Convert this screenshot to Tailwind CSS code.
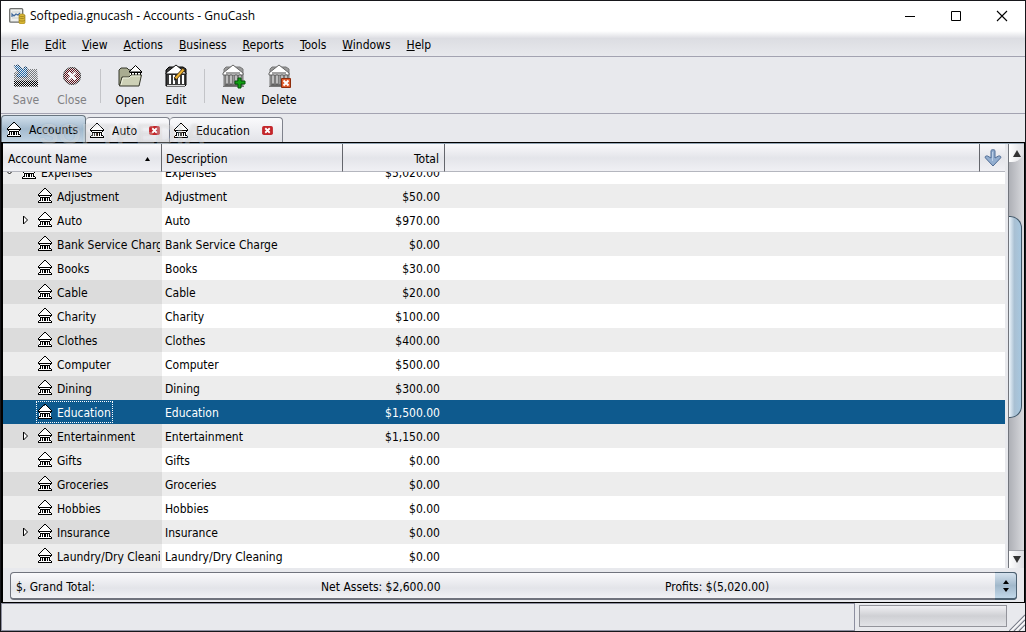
<!DOCTYPE html>
<html lang="en">
<head>
    <meta charset="UTF-8">
    <meta name="viewport" content="width=device-width, initial-scale=1.0">
    <title>Softpedia.gnucash - Accounts - GnuCash</title>
    <script src="https://cdn.jsdelivr.net/npm/@tailwindcss/browser@4"></script>
</head>
<body class="h-screen overflow-hidden bg-[#e8e9ed] font-['DejaVu_Sans_Condensed','Noto_Sans',sans-serif] text-xs text-black">

    <!-- Shared icons -->
    <svg class="absolute h-0 w-0" aria-hidden="true">
        <symbol id="bank" viewBox="0 0 14 16">
            <g shape-rendering="crispEdges">
                <path d="M7 1h1v1h1v1h1v1h1v1h1v1h1v9H1V6h1V5h1V4h1V3h1V2h2z" fill="#fff"/>
                <path d="M6 0h2v1H6zM5 1h1v1H5zM8 1h1v1H8zM4 2h1v1H4zM9 2h1v1H9zM3 3h1v1H3zM10 3h1v1h-1zM2 4h1v1H2zM11 4h1v1h-1zM1 5h1v1H1zM12 5h1v1h-1zM0 6h1v1H0zM13 6h1v1h-1z"/>
                <path d="M0 7h14v1H0zM1 8h1v1H1zM12 8h1v1h-1zM2 9h1v4H2zM4 9h1v4H4zM5 9h1v1H5zM6 9h2v4H6zM9 9h1v4H9zM8 9h1v1H8zM11 9h1v4h-1zM3 9h1v1H3zM10 9h1v1h-1zM1 12h1v1H1zM12 12h1v1h-1zM0 13h1v1H0zM13 13h1v1h-1zM0 14h14v1H0z"/>
            </g>
        </symbol>
        <symbol id="bank-large" viewBox="0 0 24 24">
            <path d="M5 3 3 5v17h19V5l-3-2z" fill="#9a9a9a" stroke="#777"/>
            <path d="M2 9 12 1l10 8v2H2z" fill="#fff" stroke="#666"/>
            <path d="M5 9h14M4 21h17" stroke="#444" stroke-width="1"/>
            <path d="M5 11h2v9H5zM9 11h2v9H9zM14 11h2v9h-2zM18 11h2v9h-2z" fill="#fff" stroke="#444" stroke-width=".7"/>
            <path d="M2 22.500h21" stroke="#777"/>
        </symbol>
        <symbol id="tab-x" viewBox="0 0 12 10">
            <rect width="12" height="10" rx="2" fill="#c4262b"/>
            <path d="m3.500 2.500 5 5m0-5-5 5" stroke="#fff" stroke-width="2"/>
        </symbol>
        <pattern id="stipple" width="2" height="2" patternUnits="userSpaceOnUse">
            <path d="M0 0h1v1H0zM1 1h1v1H1z" fill="#e8e9ed"/>
        </pattern>
    </svg>

    <div class="flex h-full flex-col border border-[#17171b]">

        <!-- Title bar -->
        <header class="flex h-[30px] shrink-0 items-center bg-white pl-2 font-['Open_Sans',sans-serif]">
            <svg class="mr-1 h-4 w-[17px]" viewBox="0 0 17 16" fill="none">
                <rect x=".7" y=".7" width="13" height="13.500" rx="1" fill="#eef0ee" stroke="#6d6f6d" stroke-width="1.300"/>
                <path d="M3 4h9M3 7h9M3 10h9" stroke="#ccd0cc"/>
                <path d="M3 9V6l2 2 2-2 2 1 2-2" stroke="#40699c" stroke-width="1.200"/>
                <path d="M10 7.500c0-2 6-2 6 0v7c0 2-6 2-6 0z" fill="#d8b634" stroke="#a5881f" stroke-width=".7"/>
                <path d="M10 9.500c1 1.500 5 1.500 6 0M10 12c1 1.500 5 1.500 6 0M10 7.500c1 1.500 5 1.500 6 0" stroke="#9b7e1c" stroke-width=".8"/>
            </svg>
            <h1 class="flex-1">Softpedia.gnucash - Accounts - GnuCash</h1>
            <button aria-label="Minimize" class="flex w-[46px] justify-center"><svg class="size-3" viewBox="0 0 12 12"><path d="M1 6.500h10" stroke="#000"/></svg></button>
            <button aria-label="Maximize" class="flex w-[46px] justify-center"><svg class="size-3" viewBox="0 0 12 12"><path d="M1.500 1.500h9v9h-9z" fill="none" stroke="#000"/></svg></button>
            <button aria-label="Close window" class="flex w-[46px] justify-center"><svg class="size-3" viewBox="0 0 12 12"><path d="m1 1 10 10M11 1 1 11" stroke="#000" stroke-width="1.100"/></svg></button>
        </header>

        <!-- Menu bar -->
        <nav class="flex h-[26px] shrink-0 items-center border-b border-[#a3a3b1] bg-linear-to-b from-white via-[#dcdde2] via-30% to-[#e8e9ed] pt-[2px] pl-[2px]">
            <button class="px-2"><u>F</u>ile</button>
            <button class="px-2"><u>E</u>dit</button>
            <button class="px-2"><u>V</u>iew</button>
            <button class="px-2"><u>A</u>ctions</button>
            <button class="px-2"><u>B</u>usiness</button>
            <button class="px-2"><u>R</u>eports</button>
            <button class="px-2"><u>T</u>ools</button>
            <button class="px-2"><u>W</u>indows</button>
            <button class="px-2"><u>H</u>elp</button>
        </nav>

        <!-- Toolbar -->
        <div class="flex h-[57px] shrink-0 items-center border-b border-[#a3a3b1] pt-[2px] pl-[2px]" role="toolbar">
            <button disabled class="flex w-[46px] flex-col items-center gap-1 text-[#808083]">
                <svg class="h-6 w-7" viewBox="0 0 28 24">
                    <path d="M8 5h17l1 11H2V9z" fill="#77797b"/>
                    <path d="M2 16h24v7H2z" fill="#000"/>
                    <path d="M2 2 6 1l6 5V3h3v10H5v-3h3z" fill="#1f6eb0" stroke="#0d3358"/>
                    <path d="M2 16.500h24M2 22.500h24" stroke="#555"/>
                    <path d="M0 0h28v24H0z" fill="url(#stipple)"/>
                </svg>
                Save
            </button>
            <button disabled class="flex w-[46px] flex-col items-center gap-1 text-[#808083]">
                <svg class="h-6 w-6" viewBox="0 0 24 24">
                    <circle cx="12" cy="12" r="8.500" fill="#5e0c12" stroke="#000"/>
                    <path d="M0 0h24v24H0z" fill="url(#stipple)"/>
                    <circle cx="12" cy="12" r="8.500" fill="none" stroke="#777" stroke-opacity=".5"/>
                    <path d="m8.500 8.500 7 7m0-7-7 7" stroke="#f4f4f6" stroke-width="2.500"/>
                </svg>
                Close
            </button>
            <div class="mr-[6px] ml-[5px] h-[34px] w-px bg-[#c3c4c8]"></div>
            <button class="flex w-[46px] flex-col items-center gap-1">
                <svg class="h-6 w-6" viewBox="0 0 24 24" stroke-linejoin="round">
                    <path d="M1 21V6l2-2h6l2 2h9v15z" fill="#a9ac91" stroke="#34362a"/>
                    <path d="m11 8 6.500-6.500L24 8z" fill="#fff" stroke="#000"/>
                    <path d="M12 8h11v6H12z" fill="#fff"/>
                    <path d="M13.500 9v5m3-5v5m3-5v5m3-5v5M12 8.500h12" stroke="#000"/>
                    <path d="M1.500 22 4 13h7l2-2h10.500L21 22z" fill="#cdd0b6" stroke="#34362a"/>
                    <path d="M3 21 5 14h6l2-2h9" fill="none" stroke="#eef0dd"/>
                </svg>
                Open
            </button>
            <button class="flex w-[46px] flex-col items-center gap-1">
                <svg class="h-6 w-6" viewBox="0 0 24 24">
                    <path d="M5 3 2 6v16h19l1-1V5l-3-2z" fill="#3c3c3c" stroke="#000"/>
                    <path d="m2 9 10-8 10 8v1H2z" fill="#fff" stroke="#111"/>
                    <path d="M5 11h2v9H5zM9 11h2v9H9zM14 11h2v9h-2zM18 11h2v9h-2z" fill="#fff"/>
                    <path d="M3 21.500h18" stroke="#ddd"/>
                    <path d="m11 15 9-10" stroke="#4a3610" stroke-width="3.400"/>
                    <path d="m11.500 14.500 8-9" stroke="#f0b334" stroke-width="2"/>
                    <path d="m10 16.500.5-3 2 2z" fill="#111"/>
                </svg>
                Edit
            </button>
            <div class="mx-[5px] h-[34px] w-px bg-[#c3c4c8]"></div>
            <button class="flex w-[46px] flex-col items-center gap-1">
                <svg class="h-6 w-6" viewBox="0 0 24 24" overflow="visible">
                    <use href="#bank-large" width="24" height="24"/>
                    <path d="M17 14h3v3h4v3h-4v4h-3v-4h-3v-3h3z" fill="#12a012" stroke="#05550a"/>
                </svg>
                New
            </button>
            <button class="flex w-[46px] flex-col items-center gap-1">
                <svg class="h-6 w-6" viewBox="0 0 24 24" overflow="visible">
                    <use href="#bank-large" width="24" height="24"/>
                    <path d="M14.500 14.500h9v9h-9z" fill="#dd5a2b" stroke="#8e2c0c"/>
                    <path d="m16.500 16.500 5 5m0-5-5 5" stroke="#fff" stroke-width="2"/>
                </svg>
                Delete
            </button>
        </div>

        <!-- Page tabs -->
        <div class="relative flex h-7 shrink-0 items-end" role="tablist">
            <button role="tab" aria-selected="true" class="flex h-[27px] w-[85px] items-center gap-[8px] rounded-t border border-b-0 border-[#68757f] bg-linear-to-b from-[#d2e0ec] via-[#a3bace] via-50% to-[#c2d4e3] pt-px pl-[5px]">
                <svg class="h-4 w-[14px]"><use href="#bank"/></svg>Accounts
            </button>
            <div class="flex h-[25px] w-[84px] items-center rounded-t border border-b-0 border-l-0 border-[#7f828c] bg-linear-to-b from-[#fafafc] to-[#e2e3e8] pt-px pl-1">
                <button role="tab" class="flex items-center gap-[8px]"><svg class="h-4 w-[14px]"><use href="#bank"/></svg>Auto</button>
                <button aria-label="Close Auto" class="mr-[9px] ml-auto"><svg class="h-[9px] w-[11px]"><use href="#tab-x"/></svg></button>
            </div>
            <div class="flex h-[25px] w-[113px] items-center rounded-t border border-b-0 border-l-0 border-[#7f828c] bg-linear-to-b from-[#fafafc] to-[#e2e3e8] pt-px pl-1">
                <button role="tab" class="flex items-center gap-[8px]"><svg class="h-4 w-[14px]"><use href="#bank"/></svg>Education</button>
                <button aria-label="Close Education" class="mr-[9px] ml-auto"><svg class="h-[9px] w-[11px]"><use href="#tab-x"/></svg></button>
            </div>
            <span class="pointer-events-none absolute top-1 left-[38px] z-20 font-['Liberation_Sans',sans-serif] text-[29px] leading-8 font-bold text-white/30 text-shadow-[0_0_2px_rgb(0_0_0/0.1)]" aria-hidden="true">SOFTPEDIA<sup class="text-[9px]">®</sup></span>
        </div>

        <!-- Account tree -->
        <main class="flex min-h-0 flex-1 flex-col border border-l-2 border-black">
            <div class="flex min-h-0 flex-1 border-t border-[#93a5b5]">
                <!-- The list is anchored to its last row -->
                <div class="flex min-w-0 flex-1 flex-col justify-end overflow-hidden bg-white">
                    <table class="w-full shrink-0 table-fixed border-separate border-spacing-0">
                        <thead class="sticky top-0 z-10">
                            <tr class="h-7 bg-linear-to-b from-[#f9f9fb] via-[#e4e5ea] via-50% to-[#f1f1f5]">
                                <th class="w-[159px] border-r border-b border-r-[#64666c] border-b-[#b4b6be] px-[5px] pt-[2px] text-left font-normal">
                                    <div class="flex items-center justify-between">Account Name
                                        <svg class="mr-[5px] h-1 w-[7px]" viewBox="0 0 7 4"><path d="M3.500 0 6 4H1z"/></svg>
                                    </div>
                                </th>
                                <th class="w-[181px] border-r border-b border-r-[#64666c] border-b-[#b4b6be] px-1 pt-[2px] text-left font-normal">Description</th>
                                <th class="w-[102px] border-r border-b border-r-[#64666c] border-b-[#b4b6be] px-[5px] pt-[2px] text-right font-normal">Total</th>
                                <th class="border-r border-b border-r-[#64666c] border-b-[#b4b6be]"></th>
                                <th class="w-[25px] border-b border-b-[#b4b6be] p-0">
                                    <button aria-label="Choose columns" class="mx-auto block">
                                        <svg class="h-[18px] w-[18px]" viewBox="0 0 18 18"><path d="M7 1.500c0-1 4-1 4 0V9l3.500-2c2-.5 3 1 2 2L9 17 1.500 9c-1-1 0-2.500 2-2L7 9z" fill="#93aed0" stroke="#4f6c95"/><path d="M8.500 3v9" stroke="#bccfe6"/></svg>
                                    </button>
                                </th>
                            </tr>
                        </thead>
                        <tbody id="rows"></tbody>
                    </table>
                </div>
                <!-- Vertical scrollbar -->
                <div class="ml-[3px] flex w-4 flex-col border-l border-[#72757c] bg-linear-to-r from-[#aeb0b6] to-[#d9dade]">
                    <button aria-label="Scroll up" class="flex h-[18px] items-center justify-center rounded-br-xl bg-linear-to-r from-white to-[#dcdde2]"><svg class="h-[7px] w-2" viewBox="0 0 8 7"><path d="m4 0 4 7H0z" fill="#333"/></svg></button>
                    <div class="flex flex-1 flex-col pt-[54px] pr-[2px]">
                        <div class="h-[202px] rounded-r-[12px] border border-l-0 border-[#3e5567] bg-linear-to-r from-[#edf5fb] via-[#a9c0d3] via-45% to-[#a7c7df]"></div>
                    </div>
                    <button aria-label="Scroll down" class="flex h-[18px] items-center justify-center border-t border-[#a2a4aa] bg-linear-to-r from-white to-[#dcdde2]"><svg class="h-[7px] w-2" viewBox="0 0 8 7"><path d="m4 7 4-7H0z" fill="#333"/></svg></button>
                </div>
            </div>

            <!-- Summary bar -->
            <div class="relative mx-[7px] mt-1 mb-[2px] h-7 shrink-0">
                <select aria-label="Summary" class="h-full w-full appearance-none rounded border border-b-2 border-[#70737d] bg-linear-to-b from-[#fafafc] via-[#e3e4e9] via-60% to-[#f2f2f5] px-[5px] pt-[2px]">
                    <option>$, Grand Total:</option>
                </select>
                <div class="pointer-events-none absolute inset-0 flex items-center">
                    <span class="w-[344px] pt-px pl-[311px] whitespace-nowrap">Net Assets: $2,600.00</span>
                    <span class="pt-px pl-[311px] whitespace-nowrap">Profits: $(5,020.00)</span>
                    <span class="ml-auto flex h-full w-[22px] items-center justify-center rounded-r border border-b-2 border-l-0 border-[#4c6172] bg-linear-to-b from-[#d5e2ee] via-[#a1b8cb] via-50% to-[#c2d8e9]">
                        <svg class="h-3 w-[6px]" viewBox="0 0 6 12"><path d="m3 0 3 4H0zM3 12l3-4H0z"/></svg>
                    </span>
                </div>
            </div>
        </main>

        <!-- Status bar -->
        <footer class="flex h-7 shrink-0">
            <div class="flex-1 border border-[#8d8fa0]"></div>
            <progress aria-label="Progress" value="0" class="mt-[2px] mr-[2px] ml-1 h-[22px] w-[148px] appearance-none border border-[#93949b] bg-linear-to-b from-[#f0f0f3] via-[#cfd0d4] via-50% to-[#e2e3e7] [&::-webkit-progress-bar]:bg-transparent"></progress>
            <svg class="mt-auto h-[18px] w-4" viewBox="0 0 16 18"><path d="M1 18 16 3M6 18 16 8M11 18l5-5" stroke="#fff" stroke-width="2"/><path d="M0 18 16 2M5 18 16 7M10 18l6-6" stroke="#777b88" stroke-width="1.200"/></svg>
        </footer>
    </div>

    <script>
        const accounts = [
            { name: 'Expenses', total: '$5,020.00', root: true },
            { name: 'Adjustment', total: '$50.00' },
            { name: 'Auto', total: '$970.00', children: true },
            { name: 'Bank Service Charge', total: '$0.00' },
            { name: 'Books', total: '$30.00' },
            { name: 'Cable', total: '$20.00' },
            { name: 'Charity', total: '$100.00' },
            { name: 'Clothes', total: '$400.00' },
            { name: 'Computer', total: '$500.00' },
            { name: 'Dining', total: '$300.00' },
            { name: 'Education', total: '$1,500.00', selected: true },
            { name: 'Entertainment', total: '$1,150.00', children: true },
            { name: 'Gifts', total: '$0.00' },
            { name: 'Groceries', total: '$0.00' },
            { name: 'Hobbies', total: '$0.00' },
            { name: 'Insurance', total: '$0.00', children: true },
            { name: 'Laundry/Dry Cleaning', total: '$0.00' }
        ];

        const arrow = {
            open: '<svg class="h-3 w-3 shrink-0" viewBox="0 0 12 12"><path d="M2.500 4h8l-4 4z" fill="#fff" stroke="#000"/></svg>',
            closed: '<svg class="h-3 w-3 shrink-0" viewBox="0 0 12 12"><path d="M4.500 2v8l4-4z" fill="#fff" stroke="#000"/></svg>',
            none: '<span class="w-3 shrink-0"></span>'
        };

        document.getElementById('rows').innerHTML = accounts.map((a, i) => {
            const odd = i % 2 === 1;
            const row = a.selected ? 'bg-[#0e5a8e] text-white' : odd ? 'bg-[#ededed]' : 'bg-white';
            const first = a.selected ? '' : odd ? 'bg-[#dcdcdc]' : 'bg-[#ededed]';
            const toggle = a.root ? arrow.open : a.children ? arrow.closed : arrow.none;
            const focus = a.selected ? 'outline-1 -outline-offset-1 outline-dotted outline-white' : '';
            return `
                <tr class="h-6 ${row}">
                    <td class="p-0 ${first}">
                        <div class="mr-[2px] flex items-center overflow-hidden ${a.root ? 'pl-0' : 'pl-4'}">
                            ${toggle}
                            <span class="ml-[5px] flex h-[22px] items-center gap-[5px] px-[2px] whitespace-nowrap ${focus}">
                                <svg class="h-4 w-[14px] shrink-0"><use href="#bank"/></svg><span class="pt-px">${a.name}</span>
                            </span>
                        </div>
                    </td>
                    <td class="px-[3px] pt-px pb-0">${a.name}</td>
                    <td class="px-[5px] pt-px pb-0 text-right">${a.total}</td>
                    <td colspan="2" class="p-0"></td>
                </tr>`;
        }).join('');
    </script>
</body>
</html>
